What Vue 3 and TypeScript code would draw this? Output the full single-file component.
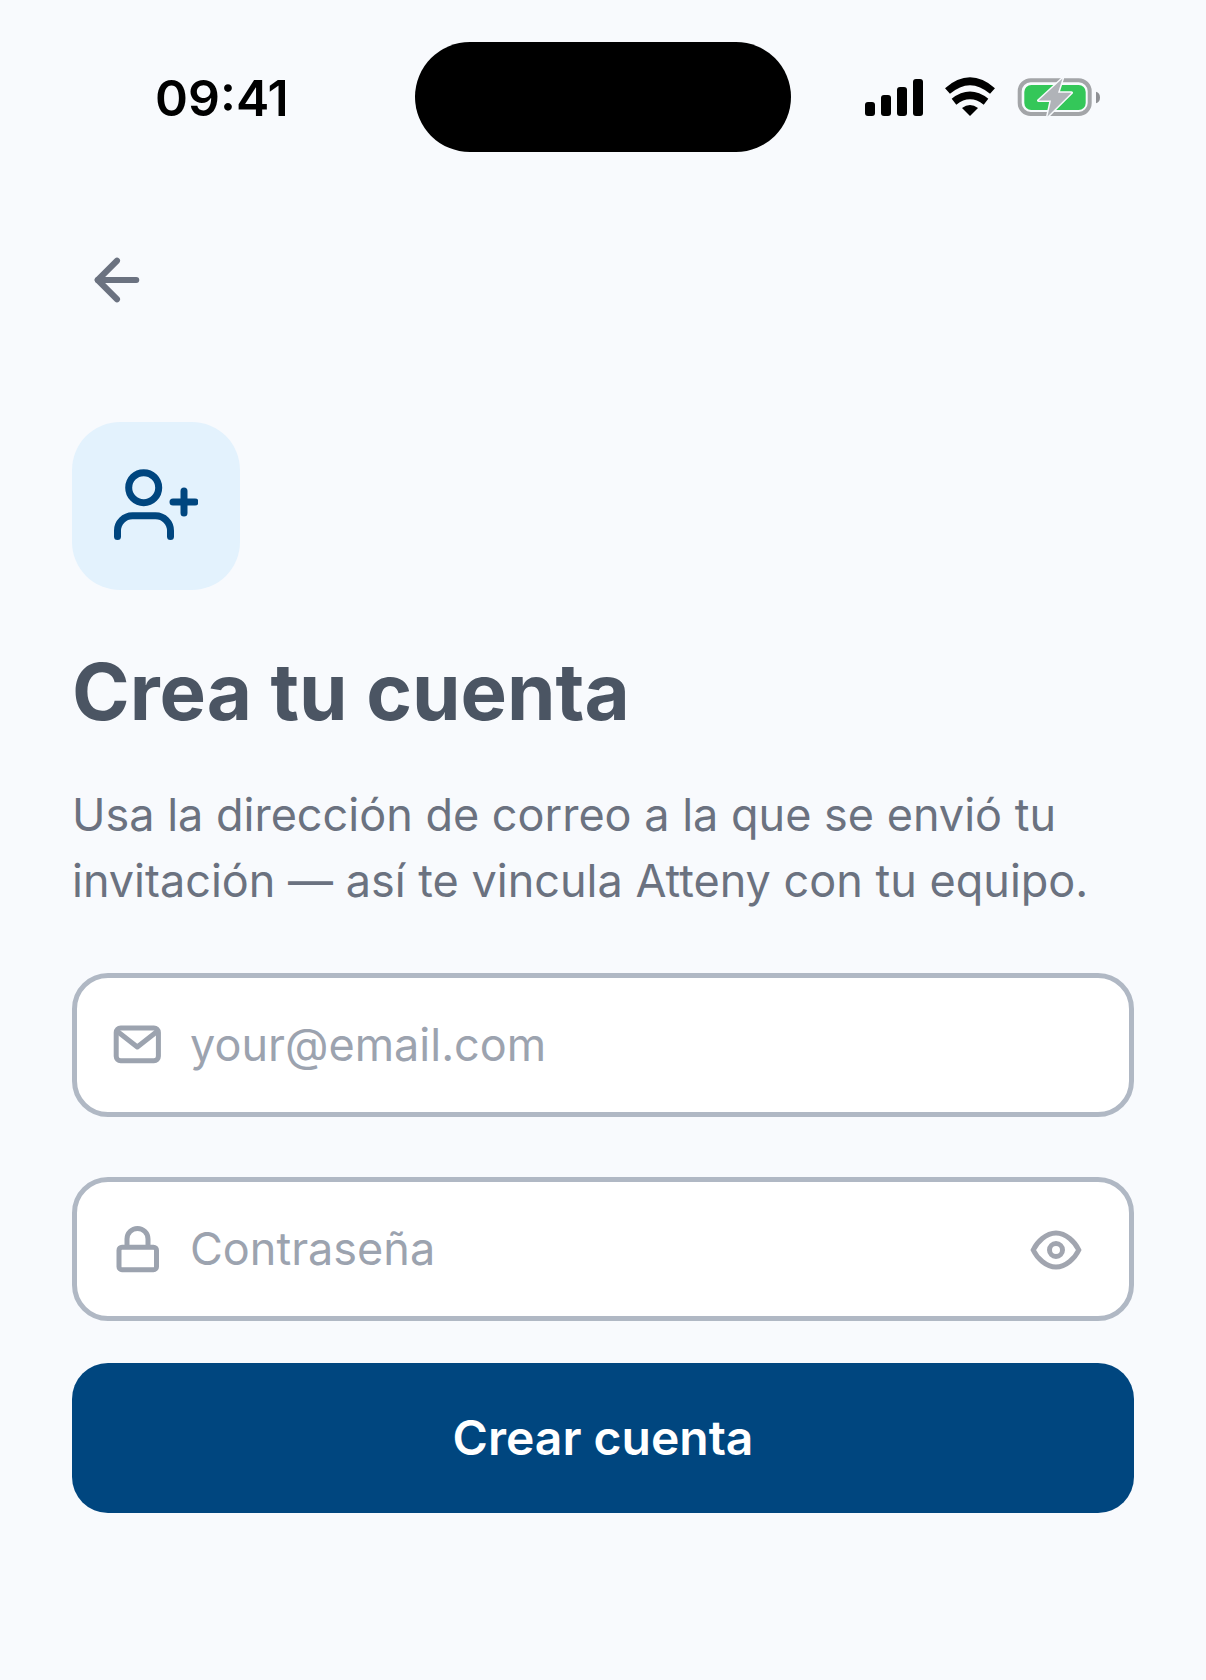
<template>
  <main class="screen">
    <!-- Status bar -->
    <header class="status-bar">
      <span class="time">09:41</span>
      <div class="island"></div>
      <div class="status-icons">
        <svg class="signal" width="58" height="38" viewBox="0 0 58 38" fill="#000">
          <rect x="0" y="23" width="10" height="14" rx="3" />
          <rect x="16" y="16" width="10" height="21" rx="3" />
          <rect x="32" y="8" width="10" height="29" rx="3" />
          <rect x="48" y="0" width="10" height="37" rx="3" />
        </svg>
        <svg width="52" height="40" viewBox="0 0 52 40" fill="none" stroke="#000" stroke-width="7.5">
          <path d="M3.5 14 Q26 -5.5 48.5 14" />
          <path d="M10 24.7 Q26 12.2 42 24.7" />
          <path d="M18 31 Q26 25 34 31 L26 39 Z" fill="#000" stroke="none" />
        </svg>
        <svg width="84" height="40" viewBox="0 0 84 40" fill="none">
          <rect x="2.7" y="3.3" width="70" height="33.7" rx="11" stroke="#a3a5a8" stroke-width="4" />
          <rect x="7.3" y="8" width="61.4" height="25" rx="7" fill="#34c759" />
          <path d="M79 14.7 Q83 16 83 20.5 Q83 25 79 26.3 Z" fill="#8e9094" />
          <path
            d="M45.5 1.5 L21.5 23.5 H34 L30.5 39.5 L54.5 15.8 H41 Z"
            fill="#b0b3b8"
            stroke="#f8fafd"
            stroke-width="3"
            stroke-linejoin="round"
            paint-order="stroke"
          />
        </svg>
      </div>
    </header>

    <button class="back" aria-label="Volver">
      <svg width="66" height="66" viewBox="0 0 24 24" fill="none" stroke="#6b7280" stroke-width="2.2" stroke-linecap="round" stroke-linejoin="round">
        <path d="M19 12H5" />
        <path d="M12 19l-7-7 7-7" />
      </svg>
    </button>

    <section class="content">
      <div class="hero-icon">
        <svg width="84" height="84" viewBox="0 0 84 84" fill="none" stroke="#00467f" stroke-width="7" stroke-linecap="round">
          <circle cx="29.7" cy="23.7" r="15" />
          <path d="M3.5 72.5V67a15 15 0 0 1 15-15.2h23a15 15 0 0 1 15 15.2v5.5" />
          <path d="M59 38h22M70 27v22" />
        </svg>
      </div>

      <h1>Crea tu cuenta</h1>
      <p class="lead">Usa la dirección de correo a la que se envió tu invitación — así te vincula Atteny con tu equipo.</p>

      <form class="form" @submit.prevent>
        <label class="field">
          <svg width="54" height="54" viewBox="0 0 54 54" fill="none" stroke="#9ca3af" stroke-width="5" stroke-linejoin="round" stroke-linecap="round">
            <rect x="6.2" y="10" width="42.2" height="32.8" rx="4.5" />
            <path d="M7.5 13.5L27.3 29 47 13.5" />
          </svg>
          <span class="placeholder">your@email.com</span>
        </label>

        <label class="field">
          <svg width="54" height="54" viewBox="0 0 54 54" fill="none" stroke="#9ca3af" stroke-width="5" stroke-linejoin="round">
            <rect x="9" y="25.2" width="37.5" height="22.5" rx="3" />
            <path d="M17 25v-8a10.5 10.5 0 0 1 21 0v8" />
          </svg>
          <span class="placeholder">Contraseña</span>
          <svg class="eye" width="54" height="54" viewBox="0 0 54 54" fill="none" stroke="#a1a5af" stroke-width="5">
            <path d="M4.2 27C8 19 17 10 27 10s19 9 22.8 17C46 35 37 44 27 44S8 35 4.2 27z" />
            <circle cx="27" cy="27" r="6.5" />
          </svg>
        </label>

        <button class="submit" type="submit">Crear cuenta</button>
      </form>
    </section>
  </main>
</template>

<script setup lang="ts">
</script>

<style>
body {
  background: #f8fafd;
}
</style>

<style scoped>
.screen {
  min-height: 1680px;
  background: #f8fafd;
  font-family: Inter, "Liberation Sans", sans-serif;
  box-sizing: border-box;
}

.status-bar {
  display: grid;
  grid-template-columns: 415px 376px 1fr;
  align-items: center;
  padding-top: 42px;
}

.time {
  padding: 2px 0 0 155px;
  font-size: 50px;
  font-weight: 600;
  color: #000;
}

.island {
  height: 110px;
  border-radius: 55px;
  background: #000;
}

.status-icons {
  display: flex;
  justify-content: flex-end;
  align-items: center;
  gap: 21px;
  padding-right: 105px;
}

.signal {
  margin-top: 2px;
}

.status-icons svg,
.back svg,
.hero-icon svg,
.field svg {
  display: block;
  flex: none;
}

.back {
  display: block;
  margin: 95px 0 0 84px;
  padding: 0;
  border: none;
  background: none;
}

.content {
  padding: 109px 72px 0;
}

.hero-icon {
  display: flex;
  justify-content: center;
  align-items: center;
  width: 168px;
  height: 168px;
  border-radius: 48px;
  background: #e3f2fd;
}

h1 {
  margin: 57px 0 0;
  font-size: 78px;
  line-height: 90px;
  font-weight: 700;
  color: #4b5563;
}

.lead {
  margin: 45px 0 0;
  font-size: 45px;
  line-height: 66px;
  color: #6b7280;
}

.form {
  display: flex;
  flex-direction: column;
  margin-top: 59px;
}

.field {
  display: flex;
  align-items: center;
  gap: 26px;
  height: 144px;
  padding: 0 46px 0 33px;
  border: 5px solid #b0b8c4;
  border-radius: 36px;
  background: #fff;
  box-sizing: border-box;
  margin-bottom: 60px;
}

.field:nth-child(2) {
  margin-bottom: 42px;
}

.placeholder {
  margin-bottom: 2px;
  font-size: 45px;
  color: #9ca3af;
}

.eye {
  margin: 2px 0 0 auto;
}

.submit {
  height: 150px;
  padding: 0 0 2px;
  border: none;
  border-radius: 36px;
  background: #00467f;
  color: #fff;
  font-family: inherit;
  font-size: 48px;
  font-weight: 600;
}
</style>
